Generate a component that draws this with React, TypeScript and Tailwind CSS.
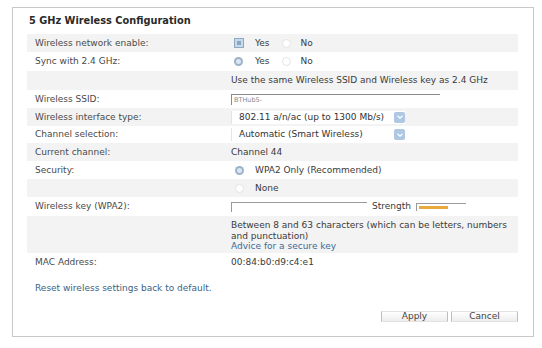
import React from 'react';

const font = { fontFamily: '"DejaVu Sans", Verdana, sans-serif' };

const Check: React.FC = () => (
  <span className="inline-block w-[10px] h-[10px] border border-[#8fa9c4] bg-[#c6d8ea] p-[2px]">
    <span className="block w-full h-full bg-[#8aa7c6]" />
  </span>
);

const Radio: React.FC<{ on?: boolean }> = ({ on }) =>
  on ? (
    <span className="inline-block w-[9px] h-[9px] rounded-full bg-[#9cb2c9] p-[2px]">
      <span className="block w-full h-full rounded-full bg-[#dbe6f0]" />
    </span>
  ) : (
    <span className="inline-block w-[9px] h-[9px] rounded-full border border-[#e4e4e4] bg-white" />
  );

const Select: React.FC<{ value: string }> = ({ value }) => (
  <div className="flex items-center w-[174px] h-[13px] bg-white border-l border-[#e4e4e4]">
    <span className="flex-1 min-w-0 pl-[7px] text-[#333] text-[9px] whitespace-nowrap overflow-hidden">{value}</span>
    <span className="flex shrink-0 items-center justify-center w-[11px] h-[11px] rounded-[2px] bg-[#aec7e2]">
      <svg width="6" height="4" viewBox="0 0 6 4">
        <path d="M0.5 0.8 L3 3.2 L5.5 0.8" stroke="#fff" strokeWidth="1.2" fill="none" />
      </svg>
    </span>
  </div>
);

interface RowProps {
  label?: string;
  gray?: boolean;
  h: string;
  children?: React.ReactNode;
}

const Row: React.FC<RowProps> = ({ label, gray, h, children }) => (
  <div className={`flex items-center ${h} ${gray ? 'bg-[#f3f3f3]' : 'bg-white'}`}>
    <div className="w-[204px] pl-[8px] text-[#4a4a4a]">{label}</div>
    <div className="flex-1 text-[#3a3a3a]">{children}</div>
  </div>
);

const btn =
  'h-[11px] flex items-center justify-center bg-gradient-to-b from-white to-[#ededed] border border-y-[#e2e2e2] border-x-[#bdbdbd] rounded-[1px] text-[#444] text-[9px] leading-[10px]';

export default function App() {
  return (
    <div className="w-[542px] h-[348px] bg-white pt-[7px] pl-[12px] text-[9px] leading-[10.5px]" style={font}>
      <div className="w-[522px] h-[330px] border border-[#c8c8c8] flex flex-col">
        <div className="pl-[16px] pt-[6px] h-[26px] text-[9.8px] font-bold text-[#2a2a2a] leading-[14px]">
          5 GHz Wireless Configuration
        </div>
        <div className="ml-[14px] w-[491px]">
          <Row label="Wireless network enable:" gray h="h-[18px]">
            <div className="flex items-center pl-[3px]">
              <Check />
              <span className="ml-[11px]">Yes</span>
              <span className="ml-[12px] flex"><Radio /></span>
              <span className="ml-[10px]">No</span>
            </div>
          </Row>
          <Row label="Sync with 2.4 GHz:" h="h-[19px]">
            <div className="flex items-center pl-[3px]">
              <Radio on />
              <span className="ml-[12px]">Yes</span>
              <span className="ml-[12px] flex"><Radio /></span>
              <span className="ml-[10px]">No</span>
            </div>
          </Row>
          <Row gray h="h-[19px]">Use the same Wireless SSID and Wireless key as 2.4 GHz</Row>
          <Row label="Wireless SSID:" h="h-[18px]">
            <div className="w-[209px] h-[11px] border-t border-l border-[#8a8a8a] pl-[2px] text-[6.5px] leading-[10px] text-[#888]">
              BTHub5-
            </div>
          </Row>
          <Row label="Wireless interface type:" gray h="h-[18px]">
            <Select value="802.11 a/n/ac (up to 1300 Mb/s)" />
          </Row>
          <Row label="Channel selection:" h="h-[17px]">
            <Select value="Automatic (Smart Wireless)" />
          </Row>
          <Row label="Current channel:" gray h="h-[18px]">Channel 44</Row>
          <Row label="Security:" h="h-[18px]">
            <div className="flex items-center pl-[4px]">
              <Radio on />
              <span className="ml-[11px]">WPA2 Only (Recommended)</span>
            </div>
          </Row>
          <Row gray h="h-[18px]">
            <div className="flex items-center pl-[4px]">
              <Radio />
              <span className="ml-[11px]">None</span>
            </div>
          </Row>
          <Row label="Wireless key (WPA2):" h="h-[19px]">
            <div className="flex items-center">
              <div className="w-[136px] h-[10px] border-t border-l border-[#9a9a9a] bg-white" />
              <span className="ml-[5px]">Strength</span>
              <div className="ml-[5px] w-[50px] h-[8px] border-t border-l border-[#9a9a9a] pl-[2px] pt-[2px]">
                <div className="w-[29px] h-[3px] bg-[#e9a93a]" />
              </div>
            </div>
          </Row>
          <div className="flex bg-[#f3f3f3] h-[37px] pt-[4px]">
            <div className="w-[204px]" />
            <div className="flex-1 text-[#3a3a3a]">
              <div>Between 8 and 63 characters (which can be letters, numbers</div>
              <div>and punctuation)</div>
              <div className="text-[#3d6a96]">Advice for a secure key</div>
            </div>
          </div>
          <Row label="MAC Address:" h="h-[18px]">00:84:b0:d9:c4:e1</Row>
        </div>
        <div className="ml-[22px] mt-[12px] text-[#3d5f82]">Reset wireless settings back to default.</div>
        <div className="flex justify-end gap-[3px] mr-[15px] mt-[17px]">
          <button className={`w-[67px] ${btn}`}>Apply</button>
          <button className={`w-[67px] ${btn}`}>Cancel</button>
        </div>
      </div>
    </div>
  );
}
